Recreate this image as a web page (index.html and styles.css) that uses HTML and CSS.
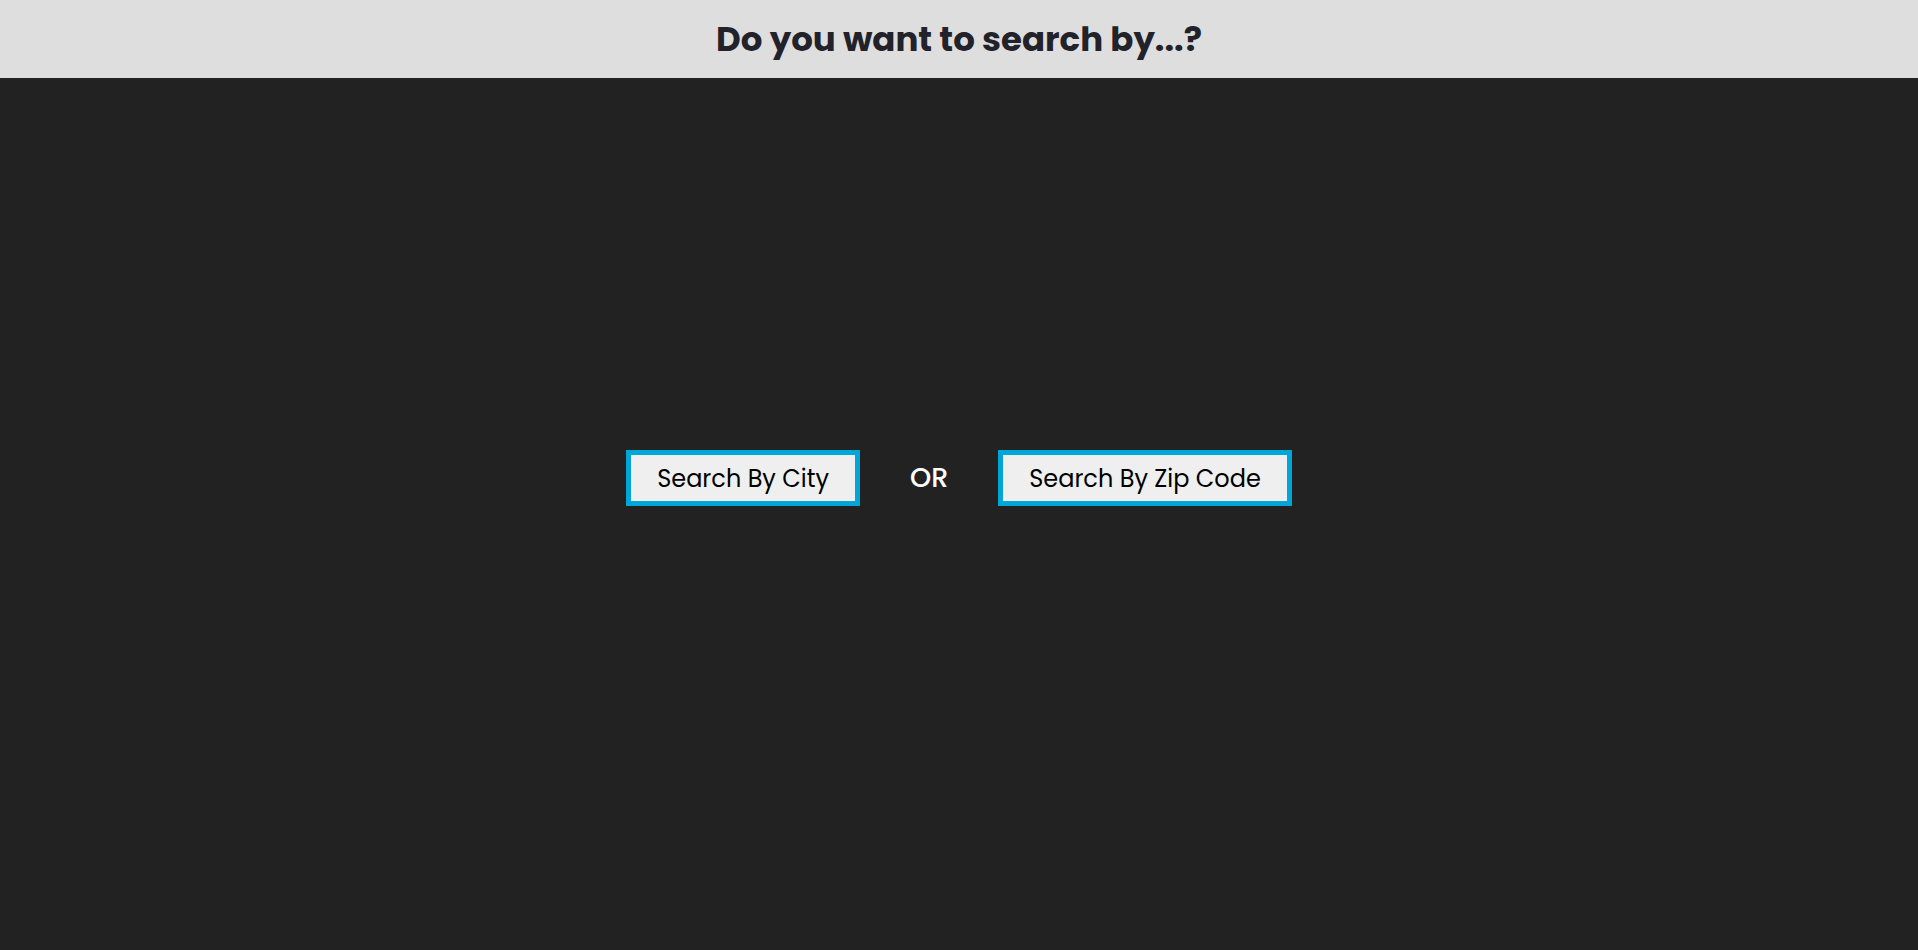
FILE: index.html
```html
<!DOCTYPE html>
<html lang="en">
<head>
<meta charset="utf-8">
<title>Search</title>
<link rel="stylesheet" href="styles.css">
</head>
<body>
<header class="top">
  <h1 class="title">Do you want to search by...?</h1>
</header>
<main class="main">
  <div class="choices">
    <button class="choice">Search By City</button>
    <span class="or">OR</span>
    <button class="choice">Search By Zip Code</button>
  </div>
</main>
</body>
</html>
```
FILE: styles.css
```css
html, body {
  margin: 0;
  padding: 0;
  background: #222222;
  font-family: "Poppins", "Inter", "Noto Sans", sans-serif;
}
.top {
  height: 78px;
  background: #dedede;
  display: flex;
  align-items: center;
  justify-content: center;
}
.title {
  margin: 0;
  font-size: 34px;
  font-weight: 700;
  color: #22222a;
  padding-top: 0;
}
.main {
  height: 872px;
  box-sizing: border-box;
  padding-bottom: 72px;
  display: flex;
  align-items: center;
  justify-content: center;
}
.choices {
  display: flex;
  align-items: center;
  gap: 50px;
}
.choice {
  box-sizing: border-box;
  height: 56px;
  padding: 0 26px;
  border: 5px solid #00a6d6;
  background: #efefef;
  color: #000;
  font-family: inherit;
  font-size: 24px;
  font-weight: 400;
}
.or {
  color: #ffffff;
  font-size: 27px;
  font-weight: 500;
}
```
